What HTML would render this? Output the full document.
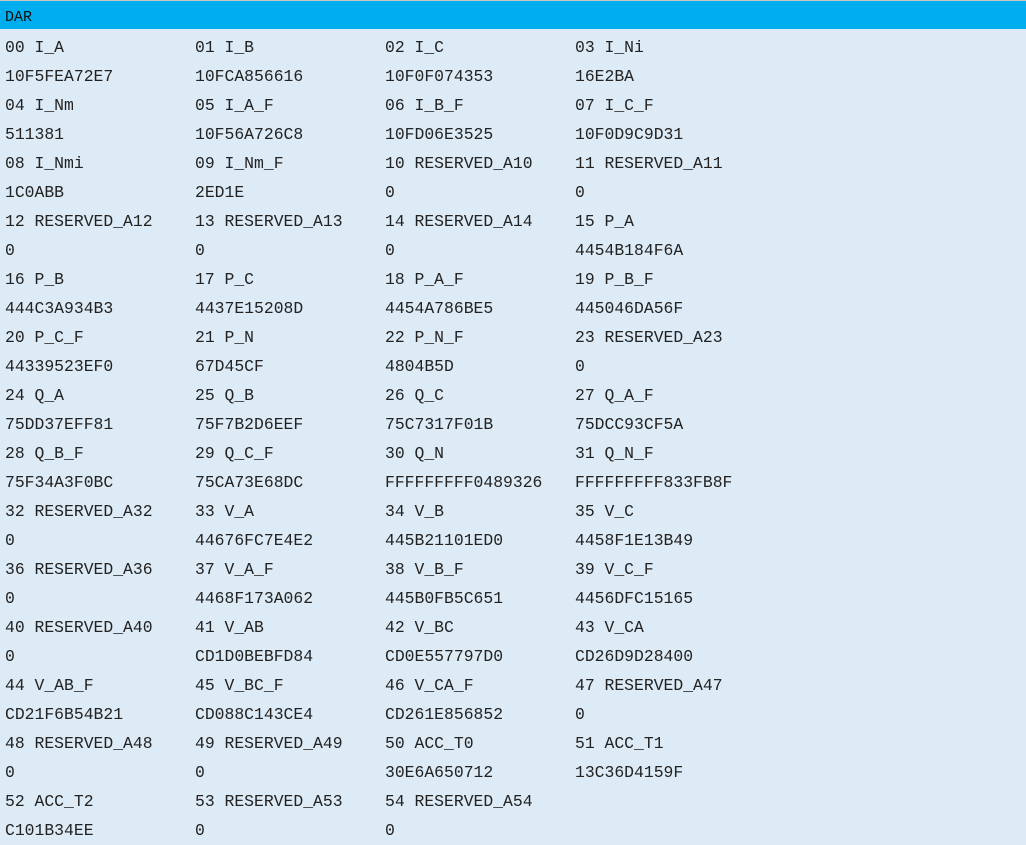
<!DOCTYPE html>
<html><head><meta charset="utf-8"><style>
html,body{margin:0;padding:0;width:1026px;height:842px;overflow:hidden;background:#ddebf6;}
body{font-family:"Liberation Mono","Courier New",monospace;color:#222;}
.top{height:1px;background:#c8c8c8;}
.hd{height:28px;background:#00aeef;font-size:15px;line-height:33px;padding-left:5px;color:#111;}
.grid{position:absolute;top:33px;left:5px;}
.row{height:29px;line-height:29px;font-size:16.4px;white-space:pre;}
.row span{display:inline-block;width:190px;}
</style></head><body>
<div class="top"></div>
<div class="hd">DAR</div>
<div class="grid">
<div class="row"><span>00 I_A</span><span>01 I_B</span><span>02 I_C</span><span>03 I_Ni</span></div>
<div class="row"><span>10F5FEA72E7</span><span>10FCA856616</span><span>10F0F074353</span><span>16E2BA</span></div>
<div class="row"><span>04 I_Nm</span><span>05 I_A_F</span><span>06 I_B_F</span><span>07 I_C_F</span></div>
<div class="row"><span>511381</span><span>10F56A726C8</span><span>10FD06E3525</span><span>10F0D9C9D31</span></div>
<div class="row"><span>08 I_Nmi</span><span>09 I_Nm_F</span><span>10 RESERVED_A10</span><span>11 RESERVED_A11</span></div>
<div class="row"><span>1C0ABB</span><span>2ED1E</span><span>0</span><span>0</span></div>
<div class="row"><span>12 RESERVED_A12</span><span>13 RESERVED_A13</span><span>14 RESERVED_A14</span><span>15 P_A</span></div>
<div class="row"><span>0</span><span>0</span><span>0</span><span>4454B184F6A</span></div>
<div class="row"><span>16 P_B</span><span>17 P_C</span><span>18 P_A_F</span><span>19 P_B_F</span></div>
<div class="row"><span>444C3A934B3</span><span>4437E15208D</span><span>4454A786BE5</span><span>445046DA56F</span></div>
<div class="row"><span>20 P_C_F</span><span>21 P_N</span><span>22 P_N_F</span><span>23 RESERVED_A23</span></div>
<div class="row"><span>44339523EF0</span><span>67D45CF</span><span>4804B5D</span><span>0</span></div>
<div class="row"><span>24 Q_A</span><span>25 Q_B</span><span>26 Q_C</span><span>27 Q_A_F</span></div>
<div class="row"><span>75DD37EFF81</span><span>75F7B2D6EEF</span><span>75C7317F01B</span><span>75DCC93CF5A</span></div>
<div class="row"><span>28 Q_B_F</span><span>29 Q_C_F</span><span>30 Q_N</span><span>31 Q_N_F</span></div>
<div class="row"><span>75F34A3F0BC</span><span>75CA73E68DC</span><span>FFFFFFFFF0489326</span><span>FFFFFFFFF833FB8F</span></div>
<div class="row"><span>32 RESERVED_A32</span><span>33 V_A</span><span>34 V_B</span><span>35 V_C</span></div>
<div class="row"><span>0</span><span>44676FC7E4E2</span><span>445B21101ED0</span><span>4458F1E13B49</span></div>
<div class="row"><span>36 RESERVED_A36</span><span>37 V_A_F</span><span>38 V_B_F</span><span>39 V_C_F</span></div>
<div class="row"><span>0</span><span>4468F173A062</span><span>445B0FB5C651</span><span>4456DFC15165</span></div>
<div class="row"><span>40 RESERVED_A40</span><span>41 V_AB</span><span>42 V_BC</span><span>43 V_CA</span></div>
<div class="row"><span>0</span><span>CD1D0BEBFD84</span><span>CD0E557797D0</span><span>CD26D9D28400</span></div>
<div class="row"><span>44 V_AB_F</span><span>45 V_BC_F</span><span>46 V_CA_F</span><span>47 RESERVED_A47</span></div>
<div class="row"><span>CD21F6B54B21</span><span>CD088C143CE4</span><span>CD261E856852</span><span>0</span></div>
<div class="row"><span>48 RESERVED_A48</span><span>49 RESERVED_A49</span><span>50 ACC_T0</span><span>51 ACC_T1</span></div>
<div class="row"><span>0</span><span>0</span><span>30E6A650712</span><span>13C36D4159F</span></div>
<div class="row"><span>52 ACC_T2</span><span>53 RESERVED_A53</span><span>54 RESERVED_A54</span><span></span></div>
<div class="row"><span>C101B34EE</span><span>0</span><span>0</span><span></span></div>
</div>
</body></html>
